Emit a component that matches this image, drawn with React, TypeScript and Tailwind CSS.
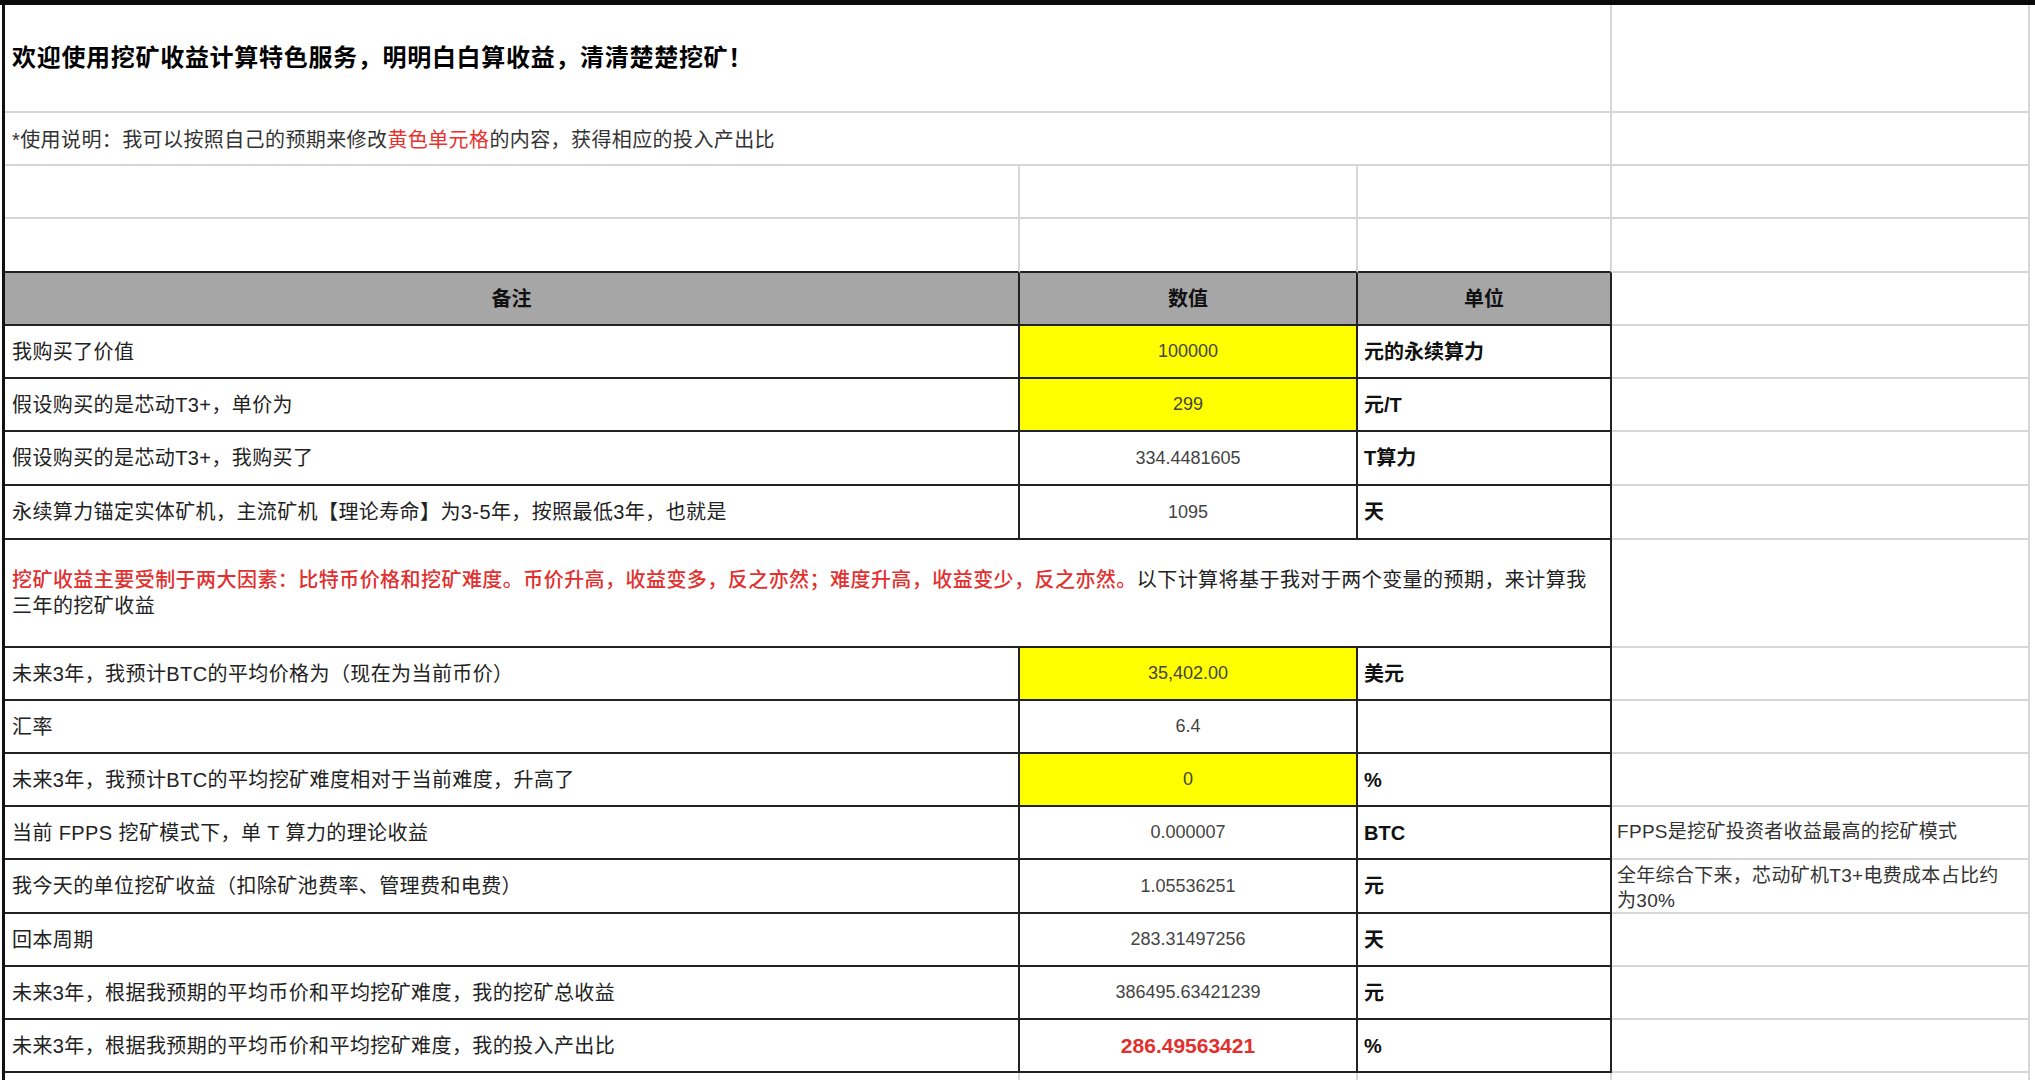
import React from "react";

type DataRow = {
  label: string;
  value: string;
  unit: string;
  h: string;
  yellow?: boolean;
  red?: boolean;
  note?: React.ReactNode;
  noteTop?: boolean;
};

const topRows: DataRow[] = [
  { label: "我购买了价值", value: "100000", unit: "元的永续算力", h: "h-[53px]", yellow: true },
  { label: "假设购买的是芯动T3+，单价为", value: "299", unit: "元/T", h: "h-[53px]", yellow: true },
  { label: "假设购买的是芯动T3+，我购买了", value: "334.4481605", unit: "T算力", h: "h-[54px]" },
  {
    label: "永续算力锚定实体矿机，主流矿机【理论寿命】为3-5年，按照最低3年，也就是",
    value: "1095",
    unit: "天",
    h: "h-[54px]",
  },
];

const bottomRows: DataRow[] = [
  { label: "未来3年，我预计BTC的平均价格为（现在为当前币价）", value: "35,402.00", unit: "美元", h: "h-[53px]", yellow: true },
  { label: "汇率", value: "6.4", unit: "", h: "h-[53px]" },
  { label: "未来3年，我预计BTC的平均挖矿难度相对于当前难度，升高了", value: "0", unit: "%", h: "h-[53px]", yellow: true },
  {
    label: "当前 FPPS 挖矿模式下，单 T 算力的理论收益",
    value: "0.000007",
    unit: "BTC",
    h: "h-[53px]",
    note: "FPPS是挖矿投资者收益最高的挖矿模式",
  },
  {
    label: "我今天的单位挖矿收益（扣除矿池费率、管理费和电费）",
    value: "1.05536251",
    unit: "元",
    h: "h-[54px]",
    note: (
      <>
        全年综合下来，芯动矿机T3+电费成本占比约
        <br />
        为30%
      </>
    ),
    noteTop: true,
  },
  { label: "回本周期", value: "283.31497256", unit: "天", h: "h-[53px]" },
  { label: "未来3年，根据我预期的平均币价和平均挖矿难度，我的挖矿总收益", value: "386495.63421239", unit: "元", h: "h-[53px]" },
  { label: "未来3年，根据我预期的平均币价和平均挖矿难度，我的投入产出比", value: "286.49563421", unit: "%", h: "h-[53px]", red: true },
];

const dark = "border-b-2 border-r-2 border-[#222]";
const light = "border-b-2 border-r-2 border-[#d6d6d6]";

function SideCell({ note, top }: { note?: React.ReactNode; top?: boolean }) {
  return (
    <div
      className={`w-[418px] shrink-0 ${light} flex pl-[5px] pr-[4px] text-[19px] tracking-[0.3px] text-[#333] ${
        top ? "items-start pt-[3px] leading-[25px]" : "items-center"
      }`}
    >
      <span>{note}</span>
    </div>
  );
}

function TableRow({ row }: { row: DataRow }) {
  return (
    <div className={`flex ${row.h}`}>
      <div className={`w-[1015px] shrink-0 ${dark} flex items-center pl-[7px] text-[20px] tracking-[0.4px] text-[#222]`}>
        {row.label}
      </div>
      <div
        className={`w-[338px] shrink-0 ${dark} flex items-center justify-center ${row.yellow ? "bg-[#ffff00]" : ""} ${
          row.red ? "text-[21px] font-bold text-[#e2302f]" : "text-[18px] text-[#444]"
        }`}
      >
        {row.value}
      </div>
      <div className={`w-[254px] shrink-0 ${dark} flex items-center pl-[6px] text-[20px] font-bold text-[#111]`}>{row.unit}</div>
      <SideCell note={row.note} top={row.noteTop} />
    </div>
  );
}

export default function App() {
  return (
    <div className="w-[2035px] h-[1080px] overflow-hidden bg-white font-['Liberation_Sans','Noto_Sans_CJK_SC',sans-serif]">
      <div className="h-[5px] bg-[#0a0a0a]" />
      <div className="flex">
        <div className="w-[2px] shrink-0" />
        <div className="w-[3px] shrink-0 bg-[#111]" />
        <div className="flex flex-col">
          {/* title */}
          <div className="flex h-[108px]">
            <div
              className={`w-[1607px] shrink-0 ${light} flex items-center pl-[7px] text-[24px] font-bold tracking-[0.7px] text-black`}
            >
              欢迎使用挖矿收益计算特色服务，明明白白算收益，清清楚楚挖矿！
            </div>
            <SideCell />
          </div>
          <div className="flex h-[53px]">
            <div className={`w-[1607px] shrink-0 ${light} flex items-center pl-[7px] pt-[3px] text-[20px] tracking-[0.4px] text-[#333]`}>
              <span>
                *使用说明：我可以按照自己的预期来修改<span className="text-[#e8312f]">黄色单元格</span>的内容，获得相应的投入产出比
              </span>
            </div>
            <SideCell />
          </div>
          <div className="flex h-[53px]">
            <div className={`w-[1015px] shrink-0 ${light}`} />
            <div className={`w-[338px] shrink-0 ${light}`} />
            <div className={`w-[254px] shrink-0 ${light}`} />
            <SideCell />
          </div>
          <div className="flex h-[54px]">
            <div className="w-[1015px] shrink-0 border-r-2 border-r-[#d6d6d6] border-b-2 border-b-[#222]" />
            <div className="w-[338px] shrink-0 border-r-2 border-r-[#d6d6d6] border-b-2 border-b-[#222]" />
            <div className="w-[254px] shrink-0 border-r-2 border-r-[#d6d6d6] border-b-2 border-b-[#222]" />
            <SideCell />
          </div>

          {/* header */}
          <div className="flex h-[53px]">
            <div className={`w-[1015px] shrink-0 ${dark} bg-[#a6a6a6] flex items-center justify-center text-[20px] font-bold text-[#111]`}>
              备注
            </div>
            <div className={`w-[338px] shrink-0 ${dark} bg-[#a6a6a6] flex items-center justify-center text-[20px] font-bold text-[#111]`}>
              数值
            </div>
            <div className={`w-[254px] shrink-0 ${dark} bg-[#a6a6a6] flex items-center justify-center text-[20px] font-bold text-[#111]`}>
              单位
            </div>
            <SideCell />
          </div>

          {topRows.map((r) => (
            <TableRow key={r.label} row={r} />
          ))}

          {/* explanation */}
          <div className="flex h-[108px]">
            <div
              className={`w-[1607px] shrink-0 ${dark} flex items-center pl-[7px] pr-[10px] text-[20px] leading-[26px] tracking-[0.45px] text-[#222]`}
            >
              <p>
                <span className="font-medium text-[#e2302f]">
                  挖矿收益主要受制于两大因素：比特币价格和挖矿难度。币价升高，收益变多，反之亦然；难度升高，收益变少，反之亦然。
                </span>
                以下计算将基于我对于两个变量的预期，来计算我
                <br />
                三年的挖矿收益
              </p>
            </div>
            <SideCell />
          </div>

          {bottomRows.map((r) => (
            <TableRow key={r.label} row={r} />
          ))}

          <div className="flex h-[10px]">
            <div className="w-[1015px] shrink-0 border-r-2 border-[#d6d6d6]" />
            <div className="w-[338px] shrink-0 border-r-2 border-[#d6d6d6]" />
            <div className="w-[254px] shrink-0 border-r-2 border-[#d6d6d6]" />
            <div className="w-[418px] shrink-0 border-r-2 border-[#d6d6d6]" />
          </div>
        </div>
      </div>
    </div>
  );
}
